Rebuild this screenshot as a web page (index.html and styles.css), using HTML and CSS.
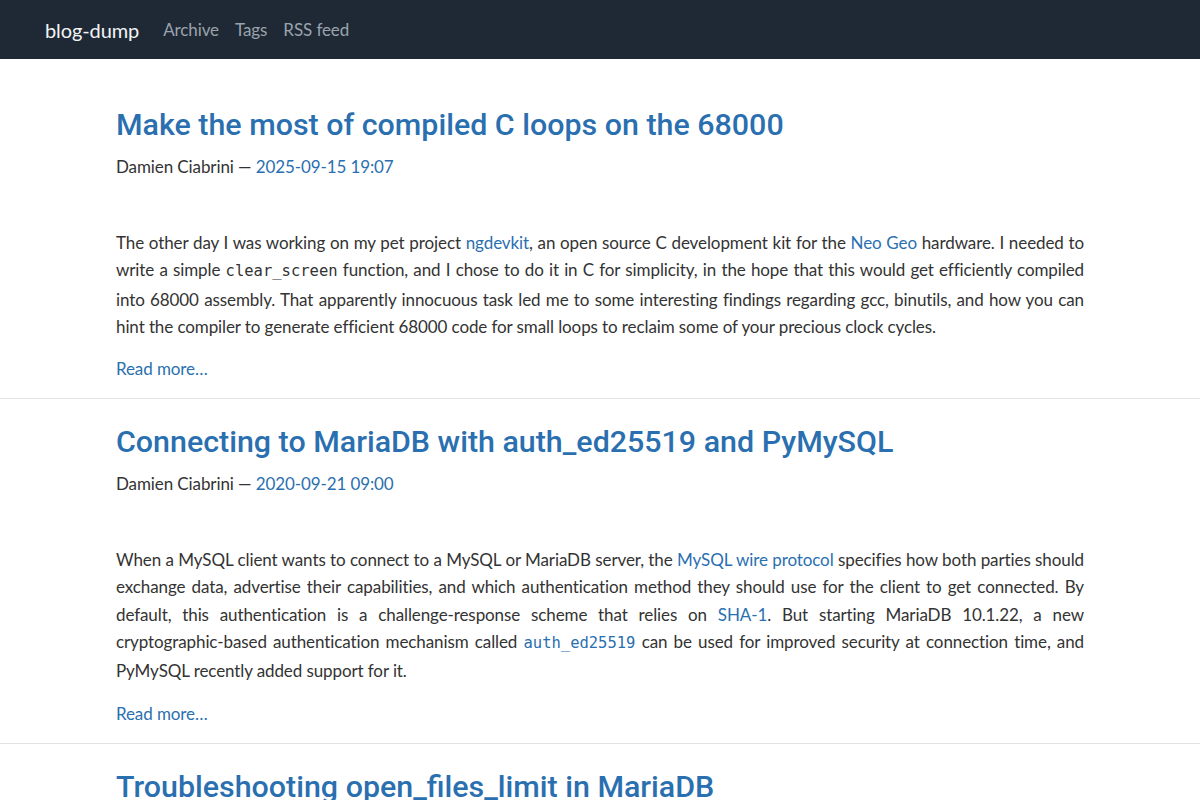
FILE: index.html
```html
<!DOCTYPE html>
<html>
	<head>
		<meta charset="utf-8">
		<title>blog-dump</title>
		<link rel="stylesheet" href="styles.css">
	</head>
	<body>
		<nav class="topbar">
			<a class="brand" href="#">blog-dump</a>
			<a class="navlink" href="#">Archive</a>
			<a class="navlink" href="#">Tags</a>
			<a class="navlink" href="#">RSS feed</a>
		</nav>

		<main class="posts">
			<article class="post first">
				<div class="inner">
					<h2 class="title"><a href="#">Make the most of compiled C loops on the 68000</a></h2>
					<div class="meta">Damien Ciabrini — <a href="#">2025-09-15 19:07</a></div>
					<p class="summary">The other day I was working on my pet project <a href="#">ngdevkit</a>, an open source C development kit for the <a href="#">Neo Geo</a> hardware. I needed to write a simple <code>clear_screen</code> function, and I chose to do it in C for simplicity, in the hope that this would get efficiently compiled into 68000 assembly. That apparently innocuous task led me to some interesting findings regarding gcc, binutils, and how you can hint the compiler to generate efficient 68000 code for small loops to reclaim some of your precious clock cycles.</p>
					<a class="more" href="#">Read more…</a>
				</div>
			</article>

			<article class="post">
				<div class="inner">
					<h2 class="title"><a href="#">Connecting to MariaDB with auth_ed25519 and PyMySQL</a></h2>
					<div class="meta">Damien Ciabrini — <a href="#">2020-09-21 09:00</a></div>
					<p class="summary">When a MySQL client wants to connect to a MySQL or MariaDB server, the <a href="#">MySQL wire protocol</a> specifies how both parties should exchange data, advertise their capabilities, and which authentication method they should use for the client to get connected. By default, this authentication is a challenge-response scheme that relies on <a href="#">SHA-1</a>. But starting MariaDB 10.1.22, a new cryptographic-based authentication mechanism called <a href="#"><code>auth_ed25519</code></a> can be used for improved security at connection time, and PyMySQL recently added support for it.</p>
					<a class="more" href="#">Read more…</a>
				</div>
			</article>

			<article class="post">
				<div class="inner">
					<h2 class="title"><a href="#">Troubleshooting open_files_limit in MariaDB</a></h2>
					<div class="meta">Damien Ciabrini — <a href="#">2020-03-02 10:00</a></div>
					<p class="summary">Some text.</p>
				</div>
			</article>
		</main>
	</body>
</html>
```

FILE: styles.css
```css
html,body{
	margin: 0;
}
body{
	font-family: Lato, "Noto Sans", sans-serif;
	font-size: 17px;
	letter-spacing: -0.1px;
	line-height: 1.5;
	color: #333;
	background: #fff;
}
a{
	color: #2a6fb0;
	text-decoration: none;
}
.topbar{
	display: flex;
	align-items: center;
	height: 59px;
	padding: 0 45px;
	background: #1f2935;
}
.brand{
	color: #f2f4f6;
	font-size: 20px;
	margin-right: 24px;
}
.navlink{
	color: #9aa3ad;
	font-size: 17px;
	margin-right: 16px;
}
.post{
	border-bottom: 1px solid #e2e2e2;
	padding: 19px 0 15px;
}
.post.first{
	padding-top: 42px;
}
.inner{
	width: 968px;
	margin: 0 auto;
}
.title{
	margin: 0;
	font-family: Roboto, sans-serif;
	font-weight: 500;
	font-size: 30.4px;
	letter-spacing: 0;
	line-height: 48px;
}
.meta{
	margin-top: 4px;
	line-height: 28px;
}
.summary{
	margin: 48px 0 15px;
	text-align: justify;
	line-height: 27.3px;
}
code{
	font-family: "DejaVu Sans Mono", "Liberation Mono", monospace;
	font-size: 15.5px;
	letter-spacing: 0;
}
.more{
	display: block;
	line-height: 28px;
}
```
